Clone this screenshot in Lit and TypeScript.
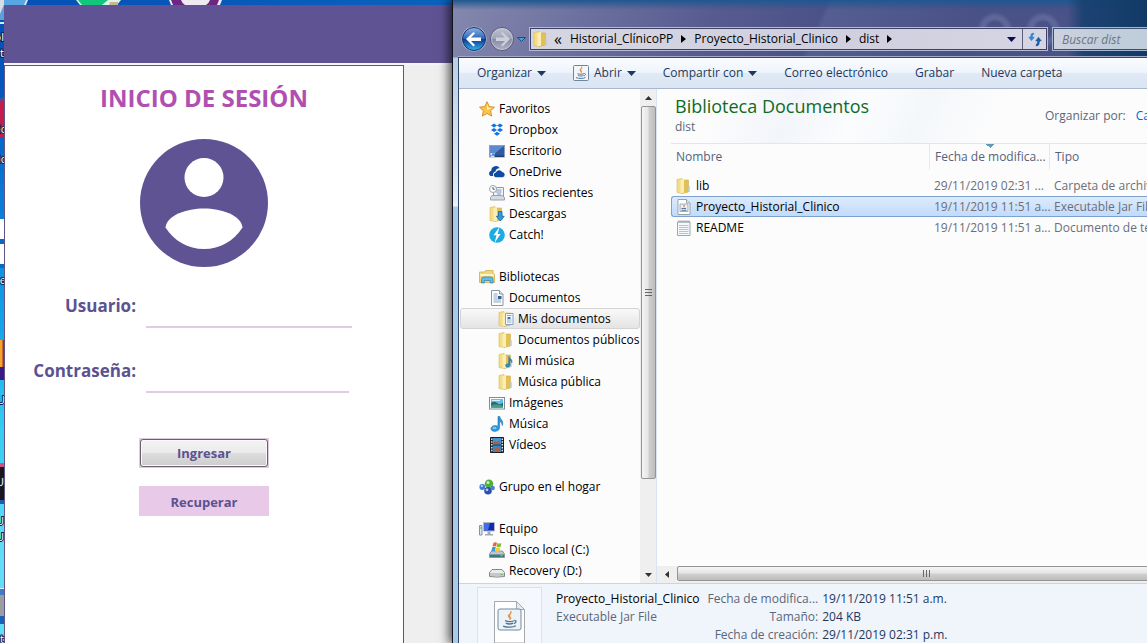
import { LitElement, html, css, svg, nothing } from "lit";
import { customElement } from "lit/decorators.js";
import { classMap } from "lit/directives/class-map.js";

const folder = svg`
  <path d="M1 1.500 6 .5v15L1 14.500z" fill="#f3dd8b" stroke="#d8b84f" stroke-width=".6"/>
  <path d="M6 2h6.500v12L6 15.500z" fill="#e3c055" stroke="#cfae48" stroke-width=".6"/>
  <path d="M4.500 2 8 .8v14L4.500 15.500z" fill="#faeeb4"/>
  <path d="M12.500 8h1.200v6h-1.700z" fill="#b9ccd0"/>`;

const javaCup = svg`
  <path d="M8.500 1.500c1.500 1.600-2.600 2.600-1.400 4.300.5.800 1.400 1 1 2.200 1.200-1.100.3-2-.1-2.700-.6-1.200 2-2 .5-3.800z" fill="#e8802a" stroke="#e8802a" stroke-width=".5"/>
  <path d="M4.500 8.700c2 .8 5 .7 6.500 0M5 10.500c1.500.7 4 .7 5.500 0M3 12.600c3 1.200 7.500 1.100 9.500-.2M11.300 8.500c1.800-.2 1.600 1.900-.3 2.300" fill="none" stroke="#4f7596" stroke-width="1"/>`;

const art: Record<string, unknown> = {
  star: svg`<path d="M8 .7 10.200 5.600 15.500 6.200 11.600 9.800 12.700 15.100 8 12.400 3.300 15.100 4.400 9.800.5 6.200 5.800 5.600z" fill="#fbc54b" stroke="#d8862b" stroke-width=".9"/>
    <path d="M8 2.800 9.300 6.500 13 7 8 9z" fill="#fff0a8"/>`,
  dropbox: svg`<g fill="#1271e6"><path d="M5 1.500 8 3.500 5 5.500 2 3.500zM11 1.500l3 2-3 2-3-2zM5 6l3 2-3 2-3-2zM11 6l3 2-3 2-3-2zM8 9.700l3 2-3 2-3-2z"/></g>`,
  desktop: svg`<rect x=".5" y="2.500" width="15" height="11.500" fill="#3058a0" stroke="#8da0b8"/>
    <path d="M1 3h14L4 12H1z" fill="#6f9ddf" opacity=".7"/><path d="M1 12.500h14v1.500H1z" fill="#24406f"/><path d="M1.500 10h4v4h-4z" fill="#d3e5f8"/><path d="M2.500 13l2-2m-1.500 0h2v2" stroke="#2d6cc0" fill="none"/>`,
  onedrive: svg`<path d="M1.500 12a2.800 2.800 0 0 1 .8-5.200A4.600 4.600 0 0 1 10.800 4.300 3.500 3.500 0 0 0 6.500 7.600 3 3 0 0 0 4.300 12z" fill="#0f4ba0"/>
    <path d="M6.500 13.300a2.400 2.400 0 0 1 .4-4.700 3.500 3.500 0 0 1 6.300-.6 2.700 2.700 0 0 1 .5 5.300z" fill="#0f4ba0"/>`,
  recent: svg`<path d="M4.500 2.500h10v9h-10z" fill="#f3f5f8" stroke="#8e9aa8"/><path d="M6.500 5h6M6.500 7h6M8 9h4" stroke="#7f9bc0"/>
    <path d="M1.500 12.500 3 10.500h10l2.500 2v2.500h-14z" fill="#d5dbe1" stroke="#99a2ab"/><circle cx="4" cy="4" r="3.500" fill="#fff" stroke="#9aa3ae"/><path d="M4 2v2.200h1.800" fill="none" stroke="#4c5d70"/>`,
  downloads: svg`${folder}<path d="M9.500 5.500h3.500v4.800h2.200L11.300 15 7.300 10.300h2.200z" fill="#2f9be0" stroke="#1668a5" stroke-width=".8"/>`,
  catch: svg`<circle cx="8" cy="8" r="7.800" fill="#1cace4"/><path d="M10.500 0 4.500 8.300h3L5.500 16 11.600 7H8.700z" fill="#fff"/>`,
  libraries: svg`<path d="M.5 3h5l1-1.500H14V5h1.500v8.500h-15z" fill="#efd67c" stroke="#cdae51" stroke-width=".8"/><path d="M1 5h14v2H1z" fill="#fdf3bf"/>
    <path d="M2.500 14V10.500Q2.500 8 5 8h6.500Q14 8 14 10.500V14h-2.800v-2.500H5.300V14z" fill="#66bce6" stroke="#3685b5" stroke-width=".8"/>`,
  document: svg`<path d="M2.500.5h8L14 4v11.500H2.500z" fill="#fdfeff" stroke="#8697a8"/><path d="M10.500.5V4H14" fill="#dfe7ee" stroke="#8697a8"/><path d="M4.500 4h4M4.500 6h4M4.500 8h4M4.500 10h7.500M4.500 12h7.500" stroke="#8aa5c4"/><path d="M9 6h3.500v3H9z" fill="#355f8e"/>`,
  folder,
  folderDoc: svg`${folder}<path d="M7.500 2.500h7.500v11H7.500z" fill="#f6faff" stroke="#8ba1b9"/><path d="M9 4.500h4.500M9 9h4.500M9 11h4.500" stroke="#94aac6"/><path d="M9.500 6h3v2h-3z" fill="#3d74bb"/>`,
  folderMusic: svg`${folder}<path d="M10.800 3.500c.4 2.300 4 2.200 3 6.200-.2-1.600-1-2.200-1.800-2.300v4.800c-.1 2-4.500 2.500-4.400.2.200-1.600 2-1.800 3.200-1.200z" fill="#2792d3" stroke="#1a6ba3" stroke-width=".6"/>`,
  pictures: svg`<rect x=".5" y="2.500" width="15" height="11.500" fill="#fff" stroke="#7b8c9c"/><path d="M2 4h12v8.500H2z" fill="#65bfe5"/><path d="M2 8q3-2.500 6 0t6-.5v5H2z" fill="#236c83"/><path d="M2 10.500q5-2 12 .5v1.500H2z" fill="#41a275"/><path d="M3 5h8v1H3z" fill="#d7f1fa"/>`,
  music: svg`<path d="M9 .5h1.800c.2 3 4.400 4 2.400 9-.1-2.300-1-3.700-2.600-4v6.300c-.2 4.500-8.600 4.700-8.600.9 0-2.600 4-4.200 7-2.300z" fill="#2e97da" stroke="#1872ac" stroke-width=".6"/><ellipse cx="5.500" cy="12" rx="2" ry="1.200" fill="#79c8f2"/>`,
  video: svg`<path d="M1.500.5h13v15h-13z" fill="#263138" stroke="#182025"/><path d="M4 1h8v6.500H4z" fill="#4695d3"/><path d="M4 8.500h8V15H4z" fill="#3a86c7"/><path d="M5 4l3 1 3-2v4H5zM5 12l3-2 3 2v2H6z" fill="#ae5e44"/><path d="M2.800 1.500v13M13.300 1.500v13" stroke="#f4f7f8" stroke-width="1.300" stroke-dasharray="1.500 1.300"/>`,
  homegroup: svg`<circle cx="3.300" cy="8" r="2.900" fill="#3b7ed5"/><circle cx="10" cy="4.800" r="4.300" fill="#52ad3d"/><circle cx="9" cy="11.800" r="3.800" fill="#2b50ae"/><circle cx="13.700" cy="9" r="2.200" fill="#4b7fd0"/>
    <circle cx="9" cy="3.500" r="1.500" fill="#caedb5"/><circle cx="2.800" cy="7" r="1.100" fill="#cde6ff"/><circle cx="8" cy="10.800" r="1.400" fill="#b6ceff"/>`,
  computer: svg`<path d="M4.500 1.500h11v8.500h-11z" fill="#1326ba" stroke="#b1bbc6"/><path d="M5 2h6l-2 7.500H5z" fill="#466be3"/><path d="M8.500 10.500h3v2.500h2.500v1.500H6V13h2.500z" fill="#9eabb7"/><path d="M.5 4.500h2.500v9.500H.5z" fill="#dce4e9" stroke="#84929b"/><path d="M1 7h1.500" stroke="#4ba548"/>`,
  disk: svg`<path d="M2.500 9h11l2 3v3.500H.5V12z" fill="#bcc8ce" stroke="#77868e" stroke-width=".8"/><path d="M1 12.500h14V15H1z" fill="#427583"/><path d="M11.500 13.200h2v1h-2z" fill="#74f05c"/>
    <path d="M4.500.8q2-1 3.500 0L7 4.500q-1.500-.8-3.500 0z" fill="#ef6332"/><path d="M8.500 1q2 1 4 0l-1 3.700q-2 1-4 0z" fill="#83bd31"/><path d="M3.300 5.200q2-.8 3.500 0l-1 4q-1.500-.8-3.500 0z" fill="#3d92df"/><path d="M7.300 5.500q2 1 4 0l-1 4q-2 .9-4 0z" fill="#f9c834"/>`,
  drive: svg`<path d="M3 6.500h10l2.500 3v4q-7.500 1.200-15 0v-4z" fill="#e9eced" stroke="#83898d"/><path d="M1 10h14v3H1z" fill="#c4c9cc"/><path d="M11.500 11h2v1h-2z" fill="#65bc4d"/>`,
  jar: svg`<path d="M2 .5h8.500L14 4v11.500H2z" fill="#fff" stroke="#9ba3aa"/><path d="M10.500.5V4H14" fill="#e9edf0" stroke="#9ba3aa"/><path d="M4 5h8v7.500H4z" fill="#e9eff4" stroke="#8ba0b3" stroke-width=".8"/><path d="M8 5.800v2.500" stroke="#e57e2f" stroke-width="1.200"/><path d="M5.500 9.500h4.500M5.500 11.300h5" stroke="#52789b"/>`,
  text: svg`<path d="M1.500 2h12.500v13.500H1.500z" fill="#f7fafc" stroke="#9aa7b0"/><path d="M3 5.500h9.500M3 7.500h9.500M3 9.500h9.500M3 11.500h9.500M3 13.500h9.500" stroke="#b5c4cf"/><path d="M2.500 1.500h11" stroke="#7c8a94" stroke-width="2" stroke-dasharray="1 1"/>`,
  java: svg`<rect x=".5" y=".5" width="15" height="15" rx="1" fill="#f2f6fa" stroke="#6f859d"/>${javaCup}`,
};

const icon = (name: string) => html`<svg class="icon" viewBox="0 0 16 16" aria-hidden="true">${art[name]}</svg>`;
const caret = html`<svg class="caret" viewBox="0 0 9 5" aria-hidden="true"><path d="M0 0h9L4.500 5z" fill="currentColor" /></svg>`;

@customElement("login-window")
class LoginWindow extends LitElement {
  static styles = css`
    :host { display: flex; flex-direction: column; min-width: 0; font-family: "Open Sans", "Noto Sans", sans-serif; }
    .banner { height: 58px; background: #605394; border-bottom: 2px solid #f6f4fa; flex: none; }
    .body { flex: 1; display: flex; background: #efefef; }
    .panel { flex: 1; box-sizing: border-box; border: 1px solid #5d5485; border-bottom: 0; background: #fff;
      display: flex; flex-direction: column; align-items: center; padding-top: 16px; color: #5c5291; }
    .gutter { width: 48px; flex: none; }
    h1 { margin: 0; font-size: 24px; line-height: 32px; color: #b14fb1; }
    .avatar { width: 128px; height: 128px; margin-top: 25px; }
    form { width: 100%; display: flex; flex-direction: column; align-items: center; margin-top: 31px; }
    .field { width: 100%; height: 30px; display: grid; grid-template-columns: 131px auto; gap: 10px; justify-content: start; margin-bottom: 35px; }
    label { text-align: right; font-size: 17px; font-weight: 700; line-height: 16px; }
    input { box-sizing: border-box; width: 206px; height: 30px; border: 0; border-bottom: 2px solid #e4cbe4; padding: 0 4px; font: inherit; background: none; outline: none; }
    .short { width: 203px; }
    button { width: 130px; height: 30px; box-sizing: border-box; padding: 0; border: 0; background: #e8c9e7; font: 700 13px/32px "Open Sans", sans-serif; color: #5c5291; }
    .actions { display: flex; flex-direction: column; gap: 18px; margin-top: 10px; }
    .primary { border: 1px solid #dfcbdf; display: flex; background: #dfcbdf; }
    .face { flex: 1; border: 1px solid #6b6070; border-radius: 3px; box-shadow: inset 0 0 0 1px #fafafa; line-height: 27px;
      background: linear-gradient(#f3f3f3, #ebebeb 48%, #dddddd 50%, #cdcdcd); }
  `;
  render() {
    return html`
      <div class="banner"></div>
      <div class="body">
        <main class="panel">
          <h1>INICIO DE SESIÓN</h1>
          <svg class="avatar" viewBox="0 0 128 128" aria-hidden="true">
            <circle cx="64" cy="64" r="64" fill="#605394" />
            <circle cx="64" cy="38.500" r="19.500" fill="#fff" />
            <path d="M25.500 88.500C27 76 47 69.500 64 69.500s37 6.500 38.500 19C94 102 80 110 64 110S34 102 25.500 88.500z" fill="#fff" />
          </svg>
          <form>
            <div class="field"><label for="user">Usuario:</label><input id="user" type="text" /></div>
            <div class="field"><label for="pass">Contraseña:</label><input id="pass" class="short" type="password" /></div>
            <div class="actions">
              <button type="button" class="primary"><span class="face">Ingresar</span></button>
              <button type="button">Recuperar</button>
            </div>
          </form>
        </main>
        <div class="gutter"></div>
      </div>`;
  }
}

type Node = { label: string; icon: string; level: number; selected?: boolean };
const tree: Node[][] = [
  [
    { label: "Favoritos", icon: "star", level: 0 },
    { label: "Dropbox", icon: "dropbox", level: 1 },
    { label: "Escritorio", icon: "desktop", level: 1 },
    { label: "OneDrive", icon: "onedrive", level: 1 },
    { label: "Sitios recientes", icon: "recent", level: 1 },
    { label: "Descargas", icon: "downloads", level: 1 },
    { label: "Catch!", icon: "catch", level: 1 },
  ],
  [
    { label: "Bibliotecas", icon: "libraries", level: 0 },
    { label: "Documentos", icon: "document", level: 1 },
    { label: "Mis documentos", icon: "folderDoc", level: 2, selected: true },
    { label: "Documentos públicos", icon: "folder", level: 2 },
    { label: "Mi música", icon: "folderMusic", level: 2 },
    { label: "Música pública", icon: "folder", level: 2 },
    { label: "Imágenes", icon: "pictures", level: 1 },
    { label: "Música", icon: "music", level: 1 },
    { label: "Vídeos", icon: "video", level: 1 },
  ],
  [{ label: "Grupo en el hogar", icon: "homegroup", level: 0 }],
  [
    { label: "Equipo", icon: "computer", level: 0 },
    { label: "Disco local (C:)", icon: "disk", level: 1 },
    { label: "Recovery (D:)", icon: "drive", level: 1 },
  ],
];

const files = [
  { name: "lib", icon: "folder", date: "29/11/2019 02:31 ...", type: "Carpeta de archivos", selected: false },
  { name: "Proyecto_Historial_Clinico", icon: "jar", date: "19/11/2019 11:51 a...", type: "Executable Jar File", selected: true },
  { name: "README", icon: "text", date: "19/11/2019 11:51 a...", type: "Documento de texto", selected: false },
];

const commands = [
  { label: "Organizar", menu: true, icon: "" },
  { label: "Abrir", menu: true, icon: "java" },
  { label: "Compartir con", menu: true, icon: "" },
  { label: "Correo electrónico", menu: false, icon: "" },
  { label: "Grabar", menu: false, icon: "" },
  { label: "Nueva carpeta", menu: false, icon: "" },
];

@customElement("explorer-window")
class ExplorerWindow extends LitElement {
  static styles = css`
    :host { display: flex; flex-direction: column; min-width: 0; box-sizing: border-box; overflow: hidden;
      border-left: 1px solid #10131c; padding-left: 5px;
      font: 12px/20px "Open Sans", "Noto Sans", sans-serif; color: #000; white-space: nowrap;
      background:
        linear-gradient(180deg, transparent 57px, #b9d0e6 58px, #e3edf6 200px, #f0f5fa 206px, #a9c9e8 207px, #abcae8 100%) 0 0 / 5px 100% no-repeat,
        radial-gradient(circle at 542px 30px, transparent 8px, #7c86b066 11px, #7c86b066 14px, transparent 18px),
        radial-gradient(circle at 590px 30px, transparent 8px, #7c86b066 11px, #7c86b066 14px, transparent 18px),
        linear-gradient(90deg, transparent 614px, #17406fdd 630px, #123a66),
        linear-gradient(180deg, #1f578f 0, #2c5c9000 10px),
        linear-gradient(115deg, #8589ae 0, #6d719f 120px, #585b90 240px, #4b5288 340px, #565d91 345px, #4a5187 480px, #4c5688 100%); }
    button, a { font: inherit; color: inherit; text-decoration: none; background: none; border: 0; padding: 0; }
    .icon { width: 16px; height: 16px; flex: none; display: block; }
    .caret { width: 9px; height: 5px; flex: none; }

    .nav { height: 24px; margin-top: 27px; padding-left: 3px; margin-bottom: 6px; display: flex; align-items: center; flex: none; }
    .round { width: 26px; height: 26px; margin-right: 2px; }
    .round svg { display: block; width: 26px; height: 26px; }
    .recent { width: 9px; height: 20px; margin-right: 4px; display: flex; align-items: center; }
    .address { flex: 1; min-width: 0; height: 20px; display: flex; align-items: center; border: 1px solid #3d4260; outline: 1px solid #b6bbd3;
      background: linear-gradient(90deg, #d6d5e2, #cfcfdf 60%, #d5d5e3); padding-left: 2px; }
    .crumb { margin-left: 8px; }
    .sep { width: 5px; height: 8px; margin-left: 8px; }
    .quotes { margin-left: 5px; font-size: 16px; line-height: 18px; }
    .drop { margin-left: auto; width: 21px; display: flex; justify-content: center; }
    .refresh { width: 24px; height: 20px; border-left: 1px solid #5b6080; display: grid; place-items: center; }
    .search { flex: 0 0 98px; width: 98px; min-width: 0; height: 22px; box-sizing: border-box; margin: 0 -4px 0 6px; border: 1px solid #3d4f70; outline: 1px solid #a8b7cc; padding: 0 8px;
      background: linear-gradient(90deg, #cfd2e0, #c0cdda 50px); font: italic 12px/20px "Open Sans", sans-serif; }
    .search::placeholder { color: #6e7484; opacity: 1; }

    .frame { flex: 1; min-height: 0; display: flex; flex-direction: column; border: 1px solid #33486a; border-width: 1px 0 0 1px; background: #fcfcfd; box-shadow: 0 -1px #a3abc8; }
    .bar { flex: none; height: 30px; border-bottom: 1px solid #aab8cd; display: flex; align-items: center; gap: 27px; padding-left: 18px; color: #1e395b;
      background: linear-gradient(#fbfdff, #eef4fc 48%, #e0e9f5 52%, #dbe5f3); }
    .bar button { display: flex; align-items: center; gap: 5px; }

    .columns { flex: 1; min-height: 0; display: grid; grid-template-columns: 198px minmax(0, 1fr); }
    .side { display: flex; min-height: 0; border-right: 1px solid #d9e4f1; overflow: hidden; }
    .tree { flex: 1; min-width: 0; padding: 9px 0 0 1px; }
    .group { margin: 0 0 21px; padding: 0; list-style: none; }
    .node { display: flex; align-items: center; gap: 4px; height: 21px; box-sizing: border-box; border: 1px solid transparent; }
    .l0 { padding-left: 18px; }
    .l1 { padding-left: 28px; }
    .l2 { padding-left: 37px; }
    .chosen { border-color: #d4d4d4; border-radius: 3px; background: linear-gradient(#f9f9f9, #e4e4e4); }

    .vscroll { width: 16px; flex: none; display: flex; flex-direction: column; justify-content: space-between; align-items: center; background: #efefef; }
    .arrow { width: 16px; height: 17px; display: grid; place-items: center; flex: none; }
    .track { flex: 1; width: 15px; }
    .vthumb { height: 81%; box-sizing: border-box; border: 1px solid #949494; border-radius: 2px;
      background: linear-gradient(90deg, #f5f5f5, #e6e6e6 45%, #cfcfcf 55%, #bdbdbd); display: grid; place-items: center; }
    .hscroll { height: 17px; flex: none; display: flex; align-items: flex-start; background: #efefef; padding-left: 2px; margin-right: -28px; }
    .hthumb { flex: 1; height: 15px; box-sizing: border-box; border: 1px solid #949494; border-radius: 2px; margin-left: 2px;
      background: linear-gradient(#f5f5f5, #e6e6e6 45%, #cfcfcf 55%, #bdbdbd); display: grid; place-items: center; }

    .main { min-width: 0; display: flex; flex-direction: column; }
    .head { flex: none; height: 54px; box-sizing: border-box; display: flex; justify-content: space-between; align-items: flex-start; padding: 5px 0 0 18px;
      background: linear-gradient(115deg, transparent 60px, #f2f5fa 130px, #fbfcfe 190px, #f4f7fa 250px, #fcfcfd 320px); }
    h2 { margin: 0; font-size: 18px; line-height: 24px; font-weight: 400; color: #0f6b1f; }
    .sub { color: #5a6778; line-height: 18px; }
    .sort { color: #5a6778; width: 102px; flex: none; overflow: hidden; display: flex; gap: 10px; padding-top: 12px; }
    .sort a { color: #0066cc; }
    .list { flex: 1; min-height: 0; overflow: hidden; padding-left: 14px; }
    table { width: 100%; border-collapse: separate; border-spacing: 0; table-layout: fixed; }
    th { height: 27px; padding: 0 0 0 5px; text-align: left; font-weight: 400; color: #55637a; box-sizing: border-box; border-top: 1px solid #dce7f3; 
      background: linear-gradient(#fcfcfd, #fcfcfd); }
    th + th { border-left: 1px solid #e2eaf4; }
    .date { background: conic-gradient(from -45deg at 50% 4px, #5f9ab8 90deg, transparent 0) 50% 0 / 8px 4px no-repeat; }
    .name { width: 258px; }
    .date { width: 120px; }
    .gap { height: 5px; padding: 0; }
    .file td { height: 19px; line-height: 19px; padding: 0 0 0 5px; color: #6b6f77; border: 1px solid transparent; border-width: 1px 0; }
    .file .cell { padding-left: 4px; color: #000; border-left-width: 1px; }
    .entry { display: flex; align-items: center; gap: 4px; }
    .active td { background: linear-gradient(#dcebfc, #c1dbfc); border-color: #7da2ce; }
    .active .cell { border-radius: 3px 0 0 3px; }

    .details { flex: none; height: 60px; box-sizing: border-box; border-top: 1px solid #c8d5e6; background: #f0f4fb; padding: 3px 0 0 18px; display: flex; overflow: hidden; }
    .thumb { width: 65px; height: 66px; box-sizing: border-box; flex: none; border: 1px solid #dae2ee; background: #f5f8fd; padding: 12px 0 0 15px; }
    .thumb svg { width: 34px; height: 44px; display: block; }
    .title { padding: 3px 0 0 14px; line-height: 18px; color: #5a6778; }
    .title strong { display: block; font-weight: 400; font-size: 12px; color: #000; }
    dl { margin: 0 0 0 8px; padding-top: 3px; display: grid; grid-template-columns: auto auto; column-gap: 4px; grid-auto-rows: 18px; line-height: 18px; align-content: start; }
    dt { text-align: right; color: #5a6778; }
    dd { margin: 0; color: #1e395b; }
  `;
  render() {
    const sep = html`<svg class="sep" viewBox="0 0 5 8" aria-hidden="true"><path d="M0 0 5 4 0 8z" /></svg>`;
    return html`
      <nav class="nav">
        <button class="round" aria-label="Atrás"><svg viewBox="0 0 26 26">
          <defs><linearGradient id="b" x2="0" y2="1"><stop stop-color="#8db4e4" /><stop offset=".48" stop-color="#2f65b6" /><stop offset=".52" stop-color="#0c3c94" /><stop offset="1" stop-color="#37b5ee" /></linearGradient></defs>
          <circle cx="13" cy="13" r="12.500" fill="#dbe4f2" opacity=".6" /><circle cx="13" cy="13" r="11.500" fill="url(#b)" stroke="#14316c" />
          <path d="M5 13l7.500-7 1.500 1.500-4 4h10v3.500H10l4 4-1.500 1.500z" fill="#fff" /></svg></button>
        <button class="round" aria-label="Adelante"><svg viewBox="0 0 26 26">
          <defs><linearGradient id="f" x2="0" y2="1"><stop stop-color="#c0c4d2" /><stop offset=".48" stop-color="#9fa3b8" /><stop offset=".52" stop-color="#868ba6" /><stop offset="1" stop-color="#b0b4c9" /></linearGradient></defs>
          <circle cx="13" cy="13" r="11.500" fill="url(#f)" stroke="#565b78" /><circle cx="13" cy="13" r="10.500" fill="none" stroke="#d0d3df" opacity=".6" />
          <path d="M21 13l-7.500-7L12 7.500l4 4H7V15h9l-4 4 1.500 1.500z" fill="#cdd0dc" /></svg></button>
        <button class="recent" aria-label="Páginas recientes"><svg class="caret" viewBox="0 0 9 5"><path d="M.5.500h8L4.500 4.500z" fill="#3fa2e6" stroke="#123a6e" stroke-width=".8" /></svg></button>
        <div class="address">
          ${icon("folder")}<span class="quotes">«</span>
          <a class="crumb" href="#">Historial_ClínicoPP</a>${sep}
          <a class="crumb" href="#">Proyecto_Historial_Clinico</a>${sep}
          <a class="crumb" href="#">dist</a>${sep}
          <button class="drop" aria-label="Ubicaciones anteriores"><svg class="caret" viewBox="0 0 9 5"><path d="M0 0h9L4.500 5z" fill="#0a0a55" /></svg></button>
          <button class="refresh" aria-label="Actualizar"><svg width="16" height="16" viewBox="0 0 16 16"><path d="M7.500 1.500Q3 1 3 5.500H.5L4.500 10.500 8.500 5.500H6q0-2 1.500-2z" fill="#3d85cc" stroke="#f0f5fb" stroke-width=".5" /><path d="M8.500 15.500q4.500.500 4.500-5h2.500L11.500 5.500 7.500 10.500H10q0 2.500-1.500 2.500z" fill="#1f5da8" stroke="#f0f5fb" stroke-width=".5" /></svg></button>
        </div>
        <input class="search" type="search" aria-label="Buscar" placeholder="Buscar dist" />
      </nav>
      <div class="frame">
        <div class="bar">
          ${commands.map((c) => html`<button>${c.icon ? icon(c.icon) : nothing}<span>${c.label}</span>${c.menu ? caret : nothing}</button>`)}
        </div>
        <div class="columns">
          <div class="side">
            <div class="tree">
              ${tree.map((g) => html`<ul class="group">
                ${g.map((n) => html`<li class=${classMap({ node: true, ["l" + n.level]: true, chosen: !!n.selected })}>${icon(n.icon)}<a href="#">${n.label}</a></li>`)}
              </ul>`)}
            </div>
            <div class="vscroll">
              <span class="arrow"><svg width="7" height="4" viewBox="0 0 7 4"><path d="M0 4 3.500 0 7 4z" fill="#333" /></svg></span>
              <div class="track"><div class="vthumb"><svg width="7" height="9" viewBox="0 0 7 9"><path d="M0 1.500h7M0 4.500h7M0 7.500h7" stroke="#666" /></svg></div></div>
              <span class="arrow"><svg width="7" height="4" viewBox="0 0 7 4"><path d="M0 0h7L3.500 4z" fill="#333" /></svg></span>
            </div>
          </div>
          <section class="main">
            <header class="head">
              <div><h2>Biblioteca Documentos</h2><div class="sub">dist</div></div>
              <div class="sort"><span>Organizar por:</span><a href="#">Carpeta</a></div>
            </header>
            <div class="list">
              <table>
                <thead><tr><th class="name">Nombre</th><th class="date">Fecha de modifica...</th><th>Tipo</th></tr></thead>
                <tbody>
                  <tr><td class="gap" colspan="3"></td></tr>
                  ${files.map((f) => html`<tr class=${classMap({ file: true, active: f.selected })}>
                    <td class="cell"><div class="entry">${icon(f.icon)}<span>${f.name}</span></div></td><td>${f.date}</td><td>${f.type}</td>
                  </tr>`)}
                </tbody>
              </table>
            </div>
            <div class="hscroll">
              <span class="arrow"><svg width="4" height="7" viewBox="0 0 4 7"><path d="M4 0v7L0 3.500z" fill="#333" /></svg></span>
              <span class="hthumb"><svg width="9" height="7" viewBox="0 0 9 7"><path d="M1.500 0v7M4.500 0v7M7.500 0v7" stroke="#666" /></svg></span>
            </div>
          </section>
        </div>
        <footer class="details">
          <div class="thumb"><svg viewBox="0 0 34 44" aria-hidden="true">
            <path d="M1.500 1.500h22l8 8V43h-30z" fill="#fff" stroke="#a4a9ae" /><path d="M23.500 1.500v8h8z" fill="#e6eaee" stroke="#a4a9ae" />
            <rect x="5" y="9" width="23" height="21" rx="2" fill="#edf2f7" stroke="#6f8aa6" />
            <g transform="translate(6 9) scale(1.350)">${javaCup}</g></svg></div>
          <div class="title"><strong>Proyecto_Historial_Clinico</strong>Executable Jar File</div>
          <dl>
            <dt>Fecha de modifica...</dt><dd>19/11/2019 11:51 a.m.</dd>
            <dt>Tamaño:</dt><dd>204 KB</dd>
            <dt>Fecha de creación:</dt><dd>29/11/2019 02:31 p.m.</dd>
          </dl>
        </footer>
      </div>`;
  }
}

@customElement("app-root")
class AppRoot extends LitElement {
  static styles = css`
    :host { display: grid; grid-template-columns: 4px minmax(0, 448fr) minmax(0, 695fr); height: 100vh; overflow: hidden;
      background: linear-gradient(#0450b8, #0457bd 90px, #0b82da 220px, #15a6ea 330px, #35cdf2 430px, #62def6 560px); }
    .edge { width: 4px; height: 643px; display: block; overflow: hidden; font: 11px/12px "Open Sans", sans-serif; }
    .stack { min-width: 0; display: flex; flex-direction: column; }
    .sliver { height: 5px; flex: none; overflow: hidden; background: linear-gradient(90deg, #0450b8, #0a62bb); }
    .sliver svg { display: block; width: 240px; height: 5px; }
    login-window { flex: 1; }
    explorer-window { box-shadow: -2px 0 10px 1px #000000b0; z-index: 1; }
  `;
  render() {
    return html`
      <svg class="edge" viewBox="0 0 4 643" aria-hidden="true">
        <path d="M0 0h5v20H0z" fill="#5b9fe0" /><path d="M0 14 5 2V0H0z" fill="#d5dde3" /><path d="M0 22h5v2H0z" fill="#dfe9f4" />
        <path d="M0 99q3-1 5-3v42H0z" fill="#c41d4c" /><path d="M0 100q3-1 5-3" stroke="#2d5fae" stroke-width="2" fill="none" />
        <path d="M0 219h5v20H0zM0 244h5v20H0z" fill="#fff" /><path d="M0 239h5v5H0zM0 264h5v4H0z" fill="#0869c6" />
        <path d="M0 340h3v27H0z" fill="#f0a52b" /><path d="M2.500 340H5v27H2.500z" fill="#a8263a" /><path d="M0 367h5v13H0z" fill="#3c1a84" />
        <path d="M0 463h5v4H0z" fill="#d64d89" /><path d="M0 467h5v33H0z" fill="#17171c" /><path d="M0 500h5v4H0z" fill="#1c5cb0" />
        <path d="M0 588h5v1H0z" fill="#e8f4fb" /><path d="M0 589h5v6H0z" fill="#3d7cc6" /><path d="M0 595h5v21H0z" fill="#9a9da1" /><path d="M0 616h5v8H0z" fill="#1763b8" />
        <g fill="#fff" stroke="#10223f" stroke-width="2" paint-order="stroke" text-anchor="end">
          <text x="4" y="41">ol</text><text x="4" y="57">it</text><text x="6" y="133">ic</text><text x="6" y="163">ic</text><text x="6" y="284">ie</text>
          <text x="5" y="404">U</text><text x="4" y="486">U</text><text x="4" y="525">U</text><text x="4" y="541">U</text><text x="4" y="643">t</text>
        </g>
      </svg>
      <div class="stack">
        <div class="sliver"><svg viewBox="4 0 240 5" aria-hidden="true">
          <path d="M4 0h23v2l-2 3H4z" fill="#57a7e2" /><path d="M26 0h2l-2 5h-2z" fill="#d6e4ef" />
          <path d="M76 0h45l-4 5H80z" fill="#dff3ea" /><path d="M78 0h30l-6 5H82z" fill="#12c77c" /><path d="M110 2h8v3h-9z" fill="#c9b98a" />
          <path d="M169 0h53l-2 5h-49z" fill="#ecebf2" /><path d="M171 0h48l-2 5h-44z" fill="#6d2783" /><path d="M181 0h29q-1 3-4 5h-21q-3-2-4-5z" fill="#edeaf1" /></svg></div>
        <login-window></login-window>
      </div>
      <explorer-window></explorer-window>`;
  }
}
